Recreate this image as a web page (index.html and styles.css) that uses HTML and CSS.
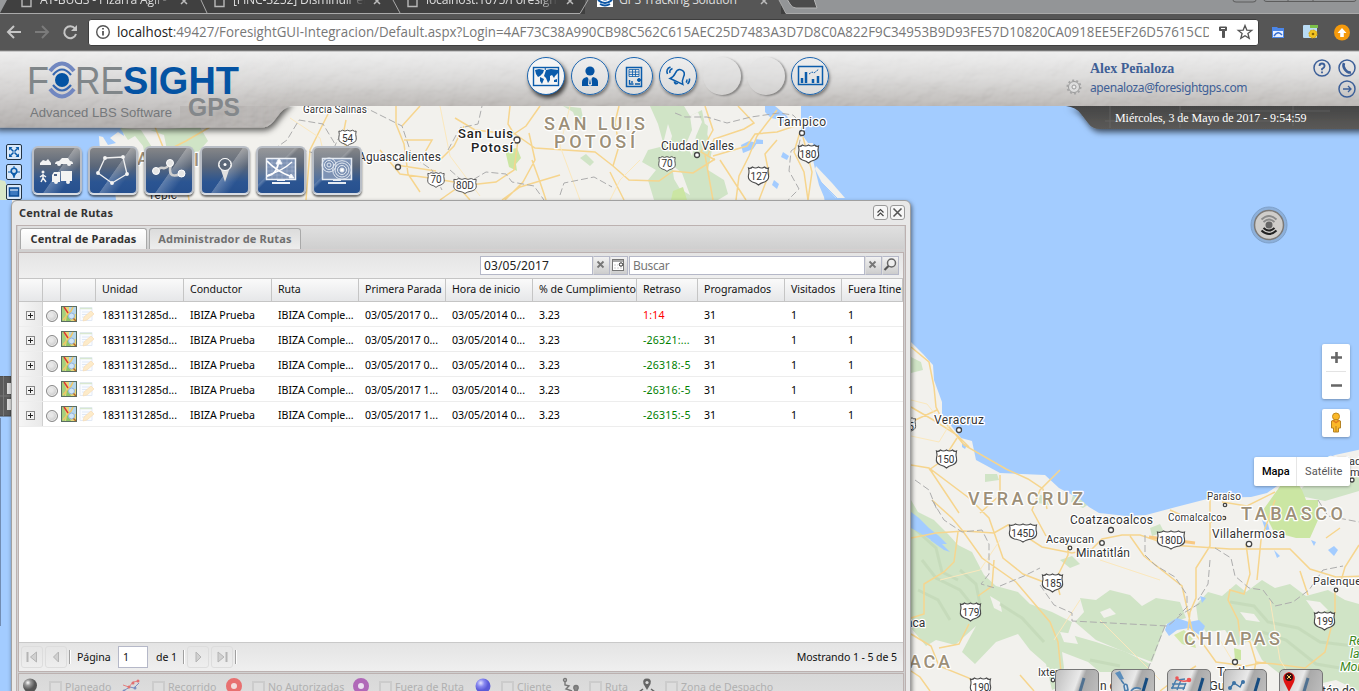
FILE: index.html
```html
<!DOCTYPE html>
<html lang="es">
<head>
<meta charset="utf-8">
<title>GPS Tracking Solution</title>
<link rel="stylesheet" href="styles.css">
</head>
<body>
<svg class="defs" width="0" height="0">
  <defs>
    <symbol id="i-map" viewBox="0 0 16 16"><rect x=".5" y=".5" width="15" height="15" fill="#e8d878" stroke="#5a6d62"/><path d="M1 1h2l2 7-1 7H1z" fill="#a5cf7d"/><path d="M8 1h7v7H8z" fill="#b4d5ea"/><path d="M2 14l5-6 3-3 2-4" stroke="#f2c665" fill="none" stroke-width="1.600"/><path d="M3 1l4 6" stroke="#d33" stroke-width="1.400"/><path d="M6 9l-1 6h5l-2-4z" fill="#8fc468"/><circle cx="10.500" cy="10" r="3" fill="#cfe4f7" stroke="#8fb2da"/><path d="M12.500 12.500l2.500 2.500" stroke="#b5652d" stroke-width="1.500"/></symbol>
    <symbol id="i-note" viewBox="0 0 16 16"><path d="M1 1.500h12v13H1z" fill="#fafcff" stroke="#e3eaf5"/><path d="M1 2.500h12" stroke="#d8e8d0" stroke-width="1.500"/><path d="M3 6h8M3 8.500h6M3 11h4" stroke="#dfe8f6"/><path d="M4 15l1-4 7-6 3 3-7 6z" fill="#fdebc9" stroke="#f6d8ae" stroke-width=".6"/></symbol>
    <symbol id="i-plus" viewBox="0 0 9 9"><rect x=".5" y=".5" width="8" height="8" fill="#f3f3f3" stroke="#888"/><path d="M2 4.500h5M4.500 2v5" stroke="#222"/></symbol>
    <symbol id="i-page" viewBox="0 0 11 14"><path d="M1 0v12.500h9V0" fill="none" stroke="#b8b8b8" stroke-width="1.400"/></symbol>
    <symbol id="i-x" viewBox="0 0 8 8"><path d="M1 1l6 6M7 1L1 7" stroke="#bbb" stroke-width="1.500"/></symbol>
    <symbol id="i-pen" viewBox="0 0 44 40"><path d="M24 26L29 9" stroke="#164c80" stroke-width="3"/></symbol>
    <symbol id="shield" viewBox="0 0 22 20" overflow="visible"><path d="M1 2Q3 3 5 1Q8 3 11 1Q14 3 17 1Q19 3 21 2Q20 6 21 9Q22 14 17 16Q13 17 11 19Q9 17 5 16Q0 14 1 9Q2 6 1 2Z" fill="#fff" stroke="#4a4a4a" stroke-width="1.100"/></symbol>
    <symbol id="shield-w" viewBox="0 0 29 20" overflow="visible"><path d="M1 2Q4 3 7 1Q11 3 14.500 1Q18 3 22 1Q25 3 28 2Q27 6 28 9Q29 14 23 16Q17 17 14.500 19Q12 17 6 16Q0 14 1 9Q2 6 1 2Z" fill="#fff" stroke="#4a4a4a" stroke-width="1.100"/></symbol>
  </defs>
</svg>

<header class="browser">
  <div class="tabs">
    <div class="tab tab-1"><svg class="fav" width="11" height="14"><use href="#i-page"/></svg><span class="tab-title fade">AT-BUGS - Pizarra Agil -</span><svg class="tx" width="8" height="8"><use href="#i-x"/></svg></div>
    <div class="tab tab-2"><svg class="fav" width="11" height="14"><use href="#i-page"/></svg><span class="tab-title fade">[FINC-3252] Disminuir el</span><svg class="tx" width="8" height="8"><use href="#i-x"/></svg></div>
    <div class="tab tab-3"><svg class="fav" width="11" height="14"><use href="#i-page"/></svg><span class="tab-title fade">localhost:1075/Foresight</span><svg class="tx" width="8" height="8"><use href="#i-x"/></svg></div>
    <div class="tab tab-4"><svg class="fav" width="16" height="16"><rect width="16" height="16" fill="#fff"/><circle cx="8" cy="6" r="3.500" fill="#0b55a5"/><path d="M1 9q7 6 14 0M3 13q5 3 10 0" stroke="#0b55a5" stroke-width="2" fill="none"/></svg><span class="tab-title">GPS Tracking Solution</span><svg class="tx" width="8" height="8"><use href="#i-x"/></svg></div>
    <svg class="tab-lines" width="1359" height="14" viewBox="0 0 1359 14"><path d="M0 13L7 0H0z" fill="#97999b"/><path d="M779 0L786 13.500H1359V0z" fill="#939597"/><path d="M0 13.500H580L588 0M201 0l6 13M393 0l7 13M779 0l7 13.500H1359" fill="none" stroke="#aaa"/><path d="M787 -1h27l3 9h-21q-4 0-6-4z" fill="#4b4b4b" stroke="#b5b5b5"/><path d="M1233 0q0 2 3 2h17q3 0 3-2M1264 0q0 1.500 3 1.500h86q3 0 3-1.500M1288 0v2M1313 0v2" stroke="#5d5d5d" fill="none"/></svg>
  </div>
  <div class="toolbar">
    <svg class="nav-icons" width="80" height="22" viewBox="0 0 80 22"><path d="M21 11H9M14 5l-6 6 6 6" fill="none" stroke="#c6c6c6" stroke-width="2"/><path d="M35 11h12M42 5l6 6-6 6" fill="none" stroke="#7b7b7b" stroke-width="2"/><path d="M75 7.500A6 6 0 1 0 76 13" fill="none" stroke="#c6c6c6" stroke-width="2"/><path d="M77 4v6h-6z" fill="#c6c6c6"/></svg>
    <div class="omnibox">
      <svg width="16" height="16"><circle cx="8" cy="8" r="6.300" fill="none" stroke="#555" stroke-width="1.400"/><path d="M8 7v4.500M8 4v1.600" stroke="#555" stroke-width="1.800"/></svg>
      <svg class="url" width="1094" height="22"><text x="0" y="16" textLength="1095" lengthAdjust="spacingAndGlyphs"><tspan fill="#222">localhost</tspan>:49427/ForesightGUI-Integracion/Default.aspx?Login=4AF73C38A990CB98C562C615AEC25D7483A3D7D8C0A822F9C34953B9D93FE57D10820CA0918EE5EF26D57615CD</text></svg>
      <svg width="36" height="16" viewBox="0 0 36 16"><path d="M6.500 3h7v3.500h-2V13.500h-2V6.500h-3z" fill="#555" stroke="#555"/><path d="M8 4.500h4" stroke="#fff"/><path d="M30 1.500l1.800 4.600 5 .3-3.900 3.100 1.300 4.900-4.200-2.700-4.200 2.700 1.300-4.900-3.900-3.100 5-.3z" transform="translate(2)" fill="none" stroke="#555" stroke-width="1.300"/></svg>
    </div>
    <svg class="ext" width="90" height="20" viewBox="0 0 90 20"><path d="M5 5h5l1 1h6v10H5z" fill="#4b86e8"/><path d="M6 9h10v6H6z" fill="#e9f0ff"/><path d="M7 14q4-6 8-1" stroke="#356dd0" stroke-width="1.500" fill="none"/><rect x="36" y="3" width="14" height="13" rx="1" fill="#b9dcf5"/><path d="M43 3h8v3h-8z" fill="#7cc04a"/><circle cx="46" cy="12" r="4" fill="#f2c321" stroke="#d9a410" stroke-dasharray="2 1"/><circle cx="46" cy="12" r="1.300" fill="#8b6508"/><circle cx="75" cy="10.500" r="8" fill="#f59a0c"/><path d="M75 6l4.500 5h-2.700v4h-3.600v-4h-2.700z" fill="#fff"/></svg>
  </div>
</header>

<main class="stage">
  <svg class="map" width="1359" height="640" viewBox="0 51 1359 640">
    <rect y="51" width="1359" height="640" fill="#f2f1ed"/>
    <path d="M0 51H92L100 150 112 165 116 200H12V691H0z" fill="#a3ccff"/>
    <path d="M92 127l3 8 8 2 5 8 8-2-6-5 8-6 6 4-2-9zM0 178l8 4 6 10-2 8H0z" fill="#a3ccff"/>
    <path d="M0 180l5 1 4 10 6 9H0z" fill="#d9e8c8"/>
    <g fill="#d0e4c6">
      <path d="M120 128l8 12 7-4 8 10 2 10 8 30 12 10h8l-6-24-12-20-14-22zM150 130l14 5 4 20 20 8 20-22-8-14zM563 106l10 6 4 10 6-4-2-10zM580 158l10 8 4-4-8-8zM650 106h34l6 10 12-6 4 20 6 20-4 20 16 10 4 14-10 6h-64l-6-20 8-10-14-8 6-12 16-4-6-22zM700 120l8 6-2 24-6-10z"/>
      <path d="M911 357l10 5 2 8-12 3zM985 474l12 0 2 6-14 2zM911 500L918 512 934 520 948 534 958 545 972 552 984 575 996 586 1018 592 1030 604 1052 612 1072 622 1068 634 1096 642 1126 652 1150 664 1146 672 1100 672 1088 662 1062 652 1066 684 1052 690 1046 664 1030 650 1018 634 996 642 975 664 962 652 976 626 955 645 936 640 926 646 911 628z"/>
      <path d="M1080 598L1096 600 1110 590 1130 595 1142 606 1156 598 1180 602 1186 618 1166 624 1160 640 1152 662 1120 650 1096 640 1075 622 1084 612z"/>
      <path d="M1196 605L1208 592 1222 596 1236 584 1246 592 1262 580 1275 588 1290 584 1306 596 1328 590 1345 600 1359 604V691L1336 680 1318 684 1300 672 1280 674 1262 660 1252 640 1236 646 1225 630 1206 632 1198 620zM1285 505l20-8 20 4 34-10v-16l-20 6-32 2-8 8z"/>
      <path d="M1075 488l10 6 4 10-6 4-12-6zM1060 560l12-4 8 8-10 4zM1040 495l12 2-2 8-12-2zM1150 528l10-4 4 8-12 4z"/>
    </g>
    <g fill="#f2f1ed"><path d="M690 116l8-4 4 10-6 14-4 20-6-12 6-14zM668 124l4 12-4 16-4-12zM672 165l10 8 8 22-10-6-6-10zM1060 632l14 2 4 10-14-2zM1100 612l10-4 6 6-12 4zM1240 612l14 2 6 8-14-2zM1306 600l14 2 8 8-12 4zM990 596l10 6 2 10-8-4z"/></g>
    <g fill="none" stroke="#bfd6b4" stroke-width="3" opacity=".6"><path d="M916 530l20 18 6 24 16 8M922 560l14 18 24 12 16 20M918 590l20 10 12 20M960 570l16 14 4 20M1000 604l22 14 22 24M1090 660l30 6M1230 602l24 4 14 16 30 6 22 14 34 4M1262 632l24 8 30 24 36 6"/></g>
    <path d="M505 150l12-2 4 10-5 6 1 7-8-4z" fill="#cbe6a3"/>
    <path d="M673 191l10-4 4 13h-16zM1263 510l20-28h14l5 8 4 10 12 0 0 20-8 18-14 0-22-6zM1234 648l7 2 0 10-6 0z" fill="#cbe6a3"/>
    <path d="M1174 635l10-5 10 10 2 8-14-4z" fill="#d4e8ac"/>
    <path d="M801 106V128l2 8 5 7 5 0-1 12 3 14 4 16 5 12 2 12L911 342l12 12 10 11 1 15 8 22 0 12 6 8 13 16 11 3 4 19 24 13 45 2 14 13 21 11 9 8 10 6 27 3 20-1 30-8 35-9 40-1 16-4 20-14 8-8 40-16 28-6V51H801z" fill="#a3ccff"/>
    <path d="M816 166l16 17 13 15h-9l-14-15-7-14z" fill="#f2f1ed"/><path d="M819 180l20 20" stroke="#a3ccff" fill="none"/>
    <g fill="#a3ccff">
      <path d="M765 106h10l12 10 6 10-4 2-8-8-10-2-6-6zM741 145l8-4 8 2-4 6-10 4zM755 139l8 1 0 4-7 0zM783 152l6 4-2 4-6-3zM774 180l5 4-2 5-5-4zM962 443l5 2-2 4-3-2zM911 512l8 6 10 10 10 8 8 8-10 0-12-8-14-8zM930 540l10 2 10 10-6-2zM1167 624l10-6 12 4 10-2 6 6-4 10-12-8-12 2-8 6-4-6zM1200 596l6 2-4 5zM1262 520l6 4 2 8-5-3zM1328 550l6-4 4 4-4 6zM1311 540l5 2-2 4zM1274 550l6 6-3 2z"/>
    </g>
    <g fill="none" stroke="#f6d58e" stroke-width="1.500">
      <path d="M155 127l12 30 18 20 4 23M210 127l-24 14-16 8M346 120l-4 20 8 12M396 106v18l8 20 4 30 12 18M380 150l20 24 30 4 24 4 16 18M420 106l-18 20M404 140h28l-8 14M396 165l40 6M330 110l-20 40-4 50M440 160l14-14 10-20M540 106l-14 20-12 8-6-10 2-18M515 134l20 14 60 4 18 14 16 14 30 1 14-10 20 2 22-14M529 133l6 27-12 22-20 20M518 140l-4 30-18 12-36 4-20 14M532 160l8 22 6 18M613 166l6-20-4-24 4-16M610 172l14 28M560 175l-40 12-18 13M455 118l20 12 35 4M708 155l6-16 30-10 10-6-16-17M705 155l8 45M713 156l34-10 8-12 22-2 24-8M715 160l-14-8 12-22-8-24M757 136l20-26M757 136l-8 20-10 20-3 24M777 140l-12 14 4 20-10 26M800 132l-6 20 10 20 4 28M720 160l26 40M803 137l9 35-4 28"/>
      <path d="M911 347l18 15 5 25 2 20 6 12 14 16 8 10 42 24 22 10 15 10 4 20M911 407l24 14 22 14 12 12M911 422l26-12M957 438l-14 22-14 10M929 468l20 30 10 15M911 465l18 3 40 30 20 20 14 40 20 16 26 10M911 538l25-5 28-2 30 2 14-8 34 22 30 6 20-4 10-10 20-4 18 0 30 10 60 4 60 0 20 20 26 8 60-2 14 0M932 500l20 18 10 12 20 28 34 24 34 40 8 20 4 40 16 24M958 532l-4 30-10 10-20 12 0 30-13 4M994 560l-2 26-14 10M911 634l20 12 8 20 30 12 10 13M969 624l-10 20-20 4M1060 595l-4-16 12-24 0-10M1130 536l14 20 38 30 10 44 14 18 10 14 30 4 20-4M1210 500l0 46-14 22 0 30-6 14-2 18M1246 544l4 30-6 20-14-4-2 10 10 20 2 16 10 6 6 20-4 20M1340 528l-14 10M1335 590l0 22-10 40-20 16-30-4-20-2M1275 500l-14 40-4 40M1060 470l-20 20-8 20 14 26M1000 475v20l-20 18M1170 510l22 10 20 2M1020 675l14 16M1196 666l-16 10-20 15M1222 502l25 4 28-14M930 691l-10-14-9-6M1359 545l-14 22-4 14M1300 571l8 24"/>
    </g>
    <g fill="none" stroke="#fbe8bd" stroke-width="1"><path d="M290 118l30 20 10 40M440 106l10 50 30 40M570 106l-10 40 20 54M640 160l-20 20-10 20M911 436l28 6 12-20M911 400l16 4 8 10M1000 540l-20 30-40 10M1080 600l-26 40M1100 620l60 60M1270 600l10 60 20 31M1220 640l30 50M1100 560l60 20"/></g>
    <path d="M1149 537l46 6" stroke="#f8c983" stroke-width="3"/>
    <path d="M273 150l14-10 12-20 24 4 12 20M362 106l40 20 10 30 20 14 10 20M450 170l16 14 20-12 20 2 6 8 22 4 10 14M448 150l12-22 18-4 4-18M675 113l10 4 22 0 20 6 24-6 28-4 14 2 10 10-4 20-8 6-2 20 10 18-10 10-4 8M560 195l4-12 30-6 18 10M290 147l40 10 8-18M932 500l12 20 18 12 20-2 7 14 0 30-8 10 14 4 M1000 586l24-10 16-8M1040 585l14 20 18 8 0 8 96 5 14-12 20-12M1165 626l-19 48M1145 535l0 20 10 10 20 12 12 18 0 12-8 8M1215 548l16 10 4 18 14 12 14 2 12 16 18-4 16-12 14-20 20-4M1318 500l10 16 31 6M915 480l14 10 8 20M1210 560l-2 24-10 16" fill="none" stroke="#adadad" stroke-dasharray="7 3"/>
    <g class="sh"><use href="#shield" x="338" y="129" width="19" height="18"/><use href="#shield" x="427" y="171" width="18" height="18"/><use href="#shield-w" x="453" y="177" width="24" height="18"/><use href="#shield" x="658" y="155" width="18" height="18"/><use href="#shield" x="747" y="166" width="23" height="20"/><use href="#shield" x="797" y="144" width="23" height="20"/><use href="#shield" x="897" y="417" width="20" height="17"/><use href="#shield" x="935" y="449" width="23" height="20"/><use href="#shield-w" x="1008" y="523" width="30" height="20"/><use href="#shield-w" x="1156" y="530" width="30" height="20"/><use href="#shield" x="1041" y="573" width="23" height="20"/><use href="#shield" x="959" y="602" width="23" height="20"/><use href="#shield" x="1313" y="611" width="23" height="20"/><use href="#shield" x="969" y="677" width="23" height="20"/></g>
    <g class="route" text-anchor="middle"><text x="347.500" y="142">54</text><text x="436" y="183">70</text><text x="465" y="189">80D</text><text x="667" y="167">70</text><text x="759" y="180">127</text><text x="808" y="158">180</text><text x="911" y="430">5</text><text x="946" y="463">150</text><text x="1023" y="537">145D</text><text x="1171" y="544">180D</text><text x="1053" y="587">185</text><text x="971" y="616">179</text><text x="1325" y="625">199</text><text x="981" y="691">190</text></g>
    <g fill="#fff" stroke="#444" stroke-width="1.300"><circle cx="398" cy="167" r="2.500"/><circle cx="517" cy="140" r="3"/><circle cx="697" cy="155" r="2.500"/><circle cx="802" cy="133" r="2.500"/><circle cx="959" cy="430" r="2.500"/><circle cx="1111" cy="530" r="2.500"/><circle cx="1070" cy="548" r="1.800"/><circle cx="1102" cy="543" r="2.300"/><circle cx="1225" cy="505" r="1.700"/><circle cx="1224" cy="518" r="1.700"/><circle cx="1249" cy="544" r="2.700"/><circle cx="1336" cy="590" r="1.800"/><circle cx="1235" cy="662" r="2.500"/><circle cx="1352" cy="480" r="2"/><circle cx="1053" cy="680" r="1.800"/></g>
    <g class="city">
      <text x="303" y="113" font-size="10" textLength="64">García Salinas</text>
      <text x="358" y="161" font-size="12" textLength="83">Aguascalientes</text>
      <text x="458" y="138" font-size="13" class="big" textLength="55">San Luis</text><text x="471" y="152" font-size="13" class="big" textLength="42">Potosí</text>
      <text x="661" y="150" font-size="12" textLength="73">Ciudad Valles</text>
      <text x="777" y="126" font-size="12" textLength="49">Tampico</text>
      <text x="148" y="199" font-size="12" textLength="29">Tepic</text>
      <text x="934" y="424" font-size="12" textLength="50">Veracruz</text>
      <text x="1070" y="524" font-size="12" textLength="83">Coatzacoalcos</text>
      <text x="1046" y="543" font-size="11" textLength="48">Acayucan</text>
      <text x="1076" y="557" font-size="12" textLength="54">Minatitlán</text>
      <text x="1168" y="521" font-size="10" textLength="54">Comalcalco</text>
      <text x="1207" y="500" font-size="10" textLength="34">Paraíso</text>
      <text x="1212" y="538" font-size="12" textLength="73">Villahermosa</text>
      <text x="1313" y="585" font-size="11" textLength="48">Palenque</text>
      <text x="906" y="627" font-size="12">aca</text>
      <text x="1038" y="676" font-size="10.500">Ixtepec</text>
      <text x="1217" y="676" font-size="13">Tuxtla</text><text x="1209" y="690" font-size="13">Gutiérrez</text>
      <text x="1100" y="690" font-size="12">n de</text><text x="1322" y="695" font-size="12">tán de</text>
      <text x="1327" y="465" font-size="11">Ciudad</text><text x="1350" y="476" font-size="11">men</text>
    </g>
    <g class="state">
      <text x="544" y="130" textLength="105">SAN LUIS</text><text x="554" y="148" textLength="85">POTOSÍ</text>
      <text x="137" y="165">A</text><text x="194" y="166">I</text>
      <text x="968" y="505" textLength="119">VERACRUZ</text><text x="1241" y="520" textLength="106">TABASCO</text>
      <text x="1184" y="645" textLength="100">CHIAPAS</text><text x="909" y="668" textLength="45">ACA</text>
    </g>
    <g class="park"><text x="1349" y="645">Res</text><text x="1350" y="658">la</text><text x="1340" y="671">Mon</text></g>
  </svg>

  <svg class="banner" width="1359" height="90" viewBox="0 51 1359 90">
    <defs>
      <linearGradient id="g-bar" x1="0" y1="0" x2="0" y2="1"><stop offset="0" stop-color="#ebebeb"/><stop offset=".5" stop-color="#d2d1d0"/><stop offset="1" stop-color="#aeaaa7"/></linearGradient>
      <linearGradient id="g-left" x1="0" y1="0" x2="0" y2="1"><stop offset="0" stop-color="#ebebeb"/><stop offset=".5" stop-color="#cac8c7"/><stop offset="1" stop-color="#a09c9a"/></linearGradient>
      <linearGradient id="g-date" x1="0" y1="0" x2="0" y2="1"><stop offset="0" stop-color="#454545"/><stop offset="1" stop-color="#5b5a58"/></linearGradient>
      <linearGradient id="g-fade" x1="0" x2="1" y1="0" y2="0"><stop offset=".7" stop-color="#fff"/><stop offset="1" stop-color="#000"/></linearGradient>
      <mask id="m-left"><rect y="51" width="295" height="90" fill="url(#g-fade)"/></mask>
      <filter id="stone" x="0" y="0" width="100%" height="100%"><feTurbulence type="fractalNoise" baseFrequency=".05 .07" numOctaves="3" seed="4"/><feDiffuseLighting lighting-color="#fff" surfaceScale="3" result="l"><feDistantLight azimuth="235" elevation="55"/></feDiffuseLighting><feComposite in="l" in2="SourceGraphic" operator="in"/></filter>
      <filter id="drop" x="-10%" y="-10%" width="120%" height="150%"><feDropShadow dx="2" dy="3" stdDeviation="3" flood-opacity=".65"/></filter>
      <clipPath id="c-head"><path d="M0 51H1359V106H298Q286 106 280 113L273 122Q268 127.500 261 127.500H0z"/></clipPath>
    </defs>
    <path d="M1066 106Q1076 107 1081 114L1088 123Q1092 129 1100 129H1365V106z" fill="url(#g-date)" filter="url(#drop)"/>
    <path d="M1110 106v22M1180 106v22M1293 106v20M1105 121h200M1180 111h150" stroke="#777" opacity=".45"/>
    <path d="M-6 100H292Q286 106 280 113L273 122Q268 127.500 261 127.500H-6z" fill="#a8a4a2" filter="url(#drop)"/>
    <g clip-path="url(#c-head)">
      <rect y="51" width="1359" height="55" fill="url(#g-bar)"/>
      <path d="M0 51H330V106H298Q286 106 280 113L273 122Q268 127.500 261 127.500H0z" fill="url(#g-left)" mask="url(#m-left)"/>
      <path d="M180 106h110l-25 22h-85z" fill="#a5a19f" opacity=".75"/>
      <rect y="51" width="1359" height="78" filter="url(#stone)" class="stone"/>
    </g>
    <path d="M0 51.500H1359" stroke="#c9c9c9"/>
    <g class="logo">
      <text x="27" y="94" textLength="22" lengthAdjust="spacingAndGlyphs" class="l1">F</text>
      <text x="75" y="94" textLength="49" lengthAdjust="spacingAndGlyphs" class="l1">RE</text>
      <text x="123" y="94" textLength="116" lengthAdjust="spacingAndGlyphs" class="l2">SIGHT</text>
      <text x="188" y="116" textLength="52" lengthAdjust="spacingAndGlyphs" class="l3">GPS</text>
      <text x="30" y="117" textLength="142" lengthAdjust="spacingAndGlyphs" class="l4">Advanced LBS Software</text>
      <circle cx="62" cy="80" r="7" fill="#0453a3"/>
      <g fill="none" stroke="#7187c0"><path d="M50 71Q62 56 74 71M50 89Q62 104 74 89" stroke-width="4"/><path d="M53 75Q62 64 71 75M53 85Q62 96 71 85" stroke="#3567b1" stroke-width="2.200"/></g>
    </g>
  </svg>

  <nav class="rounds">
    <span class="round on"><svg width="38" height="38"><rect x="6.500" y="10.500" width="25" height="18" fill="none" stroke="#0b5cab" stroke-width="1.400"/><path d="M8 13l4-1 5 1-1 3-3 3-2 1-2-3zM13 20l4 2-2 5-2-3zM19 13l5-1 7 1v3l-3 3-1 2-2-3-2 1 0 4-2 3-2-5-2-2zM27 23l3-1 0 3-3 0zM17 12l2-1 0 2z" fill="#0b5cab"/></svg></span>
    <span class="round"><svg width="38" height="38"><circle cx="19" cy="14" r="4.600" fill="#0453a3"/><path d="M11 29v-4q0-4 5-5l3 3 3-3q5 1 5 5v4z" fill="#0453a3"/><path d="M17.500 21h3l.5 7-2 1-2-1z" fill="#e7e7e7"/><path d="M19 21.500l.8 5-.8 1-.8-1z" fill="#0453a3"/></svg></span>
    <span class="round"><svg width="38" height="38" fill="none" stroke="#0b5cab"><path d="M11.500 10.500h15v19h-15z" stroke-width="1.500"/><path d="M14 12.500h10v7H14zM14 15h10M14 17.500h10M17.500 12.500v7M20.500 12.500v7" stroke-width=".8"/><path d="M14.500 23v4h4M17 24v2M20 27h5" stroke-width="1.400"/><circle cx="24" cy="23" r="1.500" fill="#0b5cab"/></svg></span>
    <span class="round"><svg width="38" height="38" fill="none" stroke="#0b5cab" stroke-width="1.500"><g transform="rotate(25 20 19)"><path d="M13 25q2.500-2.500 2.500-7 0-5.500 4.500-5.500t4.500 5.500q0 4.500 2.500 7z"/><path d="M18 26q2 3 4 0" fill="#0b5cab"/></g><path d="M8.500 17q-2-5 3-7M11 16q-1-3 2.500-4.500M28.500 27q2.500-2 2-5.500M27 25.500q1-1 1-3"/></svg></span>
    <span class="round empty"></span>
    <span class="round empty"></span>
    <span class="round"><svg width="38" height="38" fill="none" stroke="#0b5cab"><rect x="7.500" y="9.500" width="24" height="18" stroke-width="1.500"/><path d="M11 26v-5M15 26V15M22 26v-4M27 26v-7" stroke-width="2.500"/><path d="M18 17l3-2 2 1 5-4" stroke-dasharray="2 1"/></svg></span>
  </nav>

  <section class="account">
    <div class="who">
      <strong>Alex Peñaloza</strong>
      <div class="mail"><svg width="18" height="18" viewBox="0 0 18 18"><circle cx="9" cy="9" r="5.500" fill="#ddd" stroke="#999"/><circle cx="9" cy="9" r="6.600" fill="none" stroke="#a5a5a5" stroke-width="1.800" stroke-dasharray="2 2.150"/><circle cx="9" cy="9" r="2" fill="#eee" stroke="#999"/></svg><span>apenaloza@foresightgps.com</span></div>
    </div>
    <svg width="44" height="44" viewBox="0 0 44 44" fill="none" stroke="#3c5f98" stroke-width="1.500"><circle cx="10" cy="11" r="8"/><circle cx="35" cy="11" r="8"/><circle cx="35" cy="32" r="8"/><path d="M7.500 9Q7.500 6.500 10 6.500T12.600 9Q12.500 10.500 10 12v1.200M10 14.500v1.700" stroke-width="1.800"/><path d="M32 6q-1.500 3 1 6.500t6 3" stroke-width="2.600"/><path d="M31 32h8M36 29l3 3-3 3" stroke-width="1.300"/></svg>
  </section>
  <div class="date">Miércoles, 3 de Mayo de 2017 - 9:54:59</div>

  <div class="mini">
    <svg width="16" height="16"><path d="M3 3l3.500 3.500M11 3L7.500 6.500M3 11l3.500-3.500M11 11L7.500 7.500" stroke="#0b5cab" stroke-width="1.500"/><path d="M2 2h3.500L2 5.500zM12 2H8.500L12 5.500zM2 12h3.500L2 8.500zM12 12H8.500L12 8.500z" fill="#0b5cab"/></svg>
    <svg width="16" height="16"><path d="M7 1v12M1 7h12" stroke="#0b5cab"/><circle cx="7" cy="6" r="2.800" fill="#cde" stroke="#0b5cab" stroke-width="1.600"/><path d="M5 9h4l-2 4z" fill="#0b5cab"/></svg>
    <svg width="16" height="16"><path d="M2.500 3h9v8h-9z" fill="#3b78bf" stroke="#0b4c96" stroke-width="1.500"/><path d="M3 5h8" stroke="#fff"/></svg>
  </div>

  <nav class="tiles">
    <span class="tile"><svg width="50" height="48" fill="#f3f3f3"><path d="M8 17l3-3 3 1 2-2 3 4v2H8zM23 18q0-3 4-3l3-3h6l2 3q3 0 3 3z"/><circle cx="27" cy="18" r="2"/><circle cx="37" cy="18" r="2"/><path d="M20 29l2-3h6v10h-8zM29 25h11v10H29z"/><path d="M22 28h3v2h-3z" fill="#4a6085"/><circle cx="24" cy="36" r="2"/><circle cx="36" cy="36" r="2"/><circle cx="11" cy="26" r="1.500"/><path d="M11 28v4l-2 4M11 32l3 4M8 31l3-2 3 2" stroke="#f3f3f3" stroke-width="1.500" fill="none"/></svg></span>
    <span class="tile"><svg width="50" height="48" fill="none" stroke="#f0f0f0" stroke-width="1.300"><path d="M17 12l18-1 4 17-15 9-14-10z"/><g fill="#fff"><circle cx="17" cy="12" r="1.300"/><circle cx="35" cy="11" r="1.300"/><circle cx="39" cy="28" r="1.300"/><circle cx="24" cy="37" r="1.300"/><circle cx="10" cy="27" r="1.300"/></g></svg></span>
    <span class="tile"><svg width="50" height="48" fill="none" stroke="#cfcfcf" stroke-width="2.600"><path d="M12 25q4-4 7-3t7-4M27 19q-2 6 0 9t10 0"/><g fill="#e6e6e6" stroke="#fff" stroke-width="1"><circle cx="12" cy="25" r="3.500"/><circle cx="26" cy="17" r="3.500"/><circle cx="37.500" cy="27.500" r="3.500"/></g></svg></span>
    <span class="tile"><svg width="50" height="48"><path d="M25 36l-4-12q-5-4-2-9 6-6 12 0 3 5-2 9z" fill="#e0e0e0"/><circle cx="25" cy="18.500" r="6" fill="#5b6777" stroke="#fff"/><circle cx="25" cy="18.500" r="1.500" fill="#fff"/></svg></span>
    <span class="tile"><svg width="50" height="48" fill="none" stroke="#eef2f8"><path d="M10.500 12.500h29v21h-29z" fill="#7d92b4" stroke-width="1.500"/><path d="M11 17h28M11 21h28M11 25h28M11 29h28M16 13v20M21 13v20M26 13v20M31 13v20M36 13v20" opacity=".2"/><path d="M11 15q9 10 25 16M11 30q10-1 12-16" stroke-width="1.800" stroke="#fff"/><path d="M12 29q14-4 24-13" stroke="#fff" stroke-width="1.300"/><path d="M20 18l3-6 3 6zM33 32l5 0-3-4z" fill="#fff"/><path d="M21 34h8M16 37h18" stroke-width="2"/></svg></span>
    <span class="tile"><svg width="50" height="48" fill="none" stroke="#e4eaf2"><path d="M10.500 12.500h29v21h-29z" fill="#7d92b4" stroke-width="1.500"/><circle cx="17" cy="19" r="2"/><circle cx="17" cy="19" r="4.500"/><circle cx="17" cy="19" r="7"/><circle cx="30" cy="24" r="2" fill="#fff"/><circle cx="30" cy="24" r="4.500"/><circle cx="30" cy="24" r="7"/><circle cx="30" cy="24" r="9.300"/><path d="M21 34h8M16 37h18" stroke-width="2"/></svg></span>
  </nav>

  <svg class="side" width="14" height="260"><path d="M-2 0H11V40H-2z" fill="#5a5a5a" stroke="#454545"/><path d="M3.500 0v40M0 20h11" stroke="#777"/><path d="M7 7h5v11H7zM7 23h5v11H7z" fill="#ddd"/><path d="M0 42v208" stroke="#62789a" stroke-width="1.500"/></svg>

  <svg class="pulse" width="38" height="38"><circle cx="19" cy="19" r="18" fill="#8db0da" stroke="#7fa1ca"/><circle cx="19" cy="19" r="14.500" fill="#cfcdca" stroke="#7c7a78" stroke-width="1.500"/><circle cx="19" cy="19" r="3.500" fill="#666"/><path d="M13.500 16q5.500-5 11 0M11.500 13.500q7.500-7 15 0" stroke="#8a8a8a" stroke-width="1.800" fill="none"/><path d="M13.500 22q5.500 5 11 0M11.500 24.500q7.500 7 15 0" stroke="#222" stroke-width="2" fill="none"/></svg>
  <div class="zoomer"><svg width="28" height="55"><path d="M9 13.500h11M14.500 8v11M9 41.500h11" stroke="#666" stroke-width="2.600"/><path d="M4 27.500h20" stroke="#e3e3e3"/></svg></div>
  <div class="man"><svg width="28" height="28"><circle cx="14" cy="7.500" r="3.500" fill="#fbb829" stroke="#c28a1c"/><path d="M9.500 12q4.500-3 9 0v7h-2v4h-5v-4h-2z" fill="#fbb829" stroke="#b58324"/><path d="M11 11.500l3 2 3-2" stroke="#e07b1e" fill="none" stroke-width="1.500"/><path d="M14 17v6" stroke="#b58324"/></svg></div>
  <div class="maptype"><b>Mapa</b><span>Satélite</span></div>

  <nav class="edit">
    <span><svg width="44" height="40"><use href="#i-pen" opacity=".6"/></svg></span>
    <span><svg width="44" height="40"><use href="#i-pen" x="7"/><path d="M4 4l5-2 4 8-4 1z" fill="#5b8dbb"/><path d="M10 11l3 4M13 17q1-3 3-1l1 5-3 1zM20 22q4-5 10-2" stroke="#4a7dac" stroke-width="1.600" fill="#dfe8f0"/></svg></span>
    <span><svg width="44" height="40"><use href="#i-pen" x="7"/><path d="M5 19l4-8 9-1M5 15h14M4 19h14M9 11L5 20M14 11l-4 10M19 14l-3 7" stroke="#467cac" fill="none" stroke-width="1.300"/><path d="M10 10q6 4 12 1" stroke="#e55" stroke-width="1.500" fill="none"/><circle cx="22" cy="11" r="2.300" fill="#e55"/><circle cx="10" cy="9" r="1.800" fill="#e55"/></svg></span>
    <span><svg width="44" height="40"><use href="#i-pen" x="7"/><path d="M7 19l4-5 6 4 3-6" stroke="#3c72a4" fill="none" stroke-width="1.500"/><circle cx="11" cy="14" r="2" fill="#3c72a4"/><circle cx="20" cy="13" r="2" fill="#3c72a4"/><circle cx="7" cy="19" r="2" fill="#3c72a4"/></svg></span>
    <span><svg width="44" height="40"><use href="#i-pen" opacity=".6"/><path d="M10 23L5 13q-3-8 5-10 8 2 5 10z" fill="#df1414"/><circle cx="10" cy="8" r="4" fill="#311"/><path d="M8 6l4 4M12 6l-4 4" stroke="#fc6"/></svg></span>
  </nav>

  <section class="win">
    <div class="win-head"><b>Central de Rutas</b>
      <div class="tools"><span><svg width="13" height="13"><path d="M3.500 6.500l3-3 3 3M3.500 10l3-3 3 3" stroke="#444" fill="none" stroke-width="1.200"/></svg></span><span><svg width="13" height="13"><path d="M2.500 2.500l8 8M10.500 2.500l-8 8" stroke="#555" stroke-width="1.600"/></svg></span></div>
    </div>
    <div class="frame">
      <div class="tabstrip"><span class="wt active">Central de Paradas</span><span class="wt">Administrador de Rutas</span></div>
      <div class="panel">
        <div class="search">
          <div class="field date-f"><span>03/05/2017</span></div><i class="trig"><svg width="16" height="18"><path d="M4.500 5.500l6 6M10.500 5.500l-6 6" stroke="#777" stroke-width="1.800"/></svg></i><i class="trig"><svg width="16" height="18"><rect x="2.500" y="3.500" width="11" height="11" fill="#fff" stroke="#777"/><path d="M3 5h10" stroke="#aaa" stroke-width="2"/><circle cx="11" cy="8.500" r="1.700" fill="#fff" stroke="#222"/><path d="M4 9h4M4 12h8" stroke="#ccc" stroke-dasharray="2 1"/></svg></i>
          <div class="field find-f"><span>Buscar</span></div><i class="trig"><svg width="16" height="18"><path d="M4.500 5.500l6 6M10.500 5.500l-6 6" stroke="#777" stroke-width="1.800"/></svg></i><i class="trig"><svg width="16" height="18"><circle cx="9.500" cy="7" r="4" fill="#eee" stroke="#666" stroke-width="1.500"/><path d="M6.500 10l-4 4" stroke="#555" stroke-width="2.200"/></svg></i>
        </div>
        <div class="grid ghead"><span></span><span></span><span></span><span>Unidad</span><span>Conductor</span><span>Ruta</span><span>Primera Parada</span><span>Hora de inicio</span><span>% de Cumplimiento</span><span>Retraso</span><span>Programados</span><span>Visitados</span><span>Fuera Itinerario</span></div>
        <div class="rows">
          <div class="grid row"><span class="exp"><svg width="9" height="9"><use href="#i-plus"/></svg></span><span class="rad"><i></i></span><span class="ico"><svg width="16" height="16"><use href="#i-map"/></svg><svg width="16" height="16"><use href="#i-note"/></svg></span><span>1831131285d...</span><span>IBIZA Prueba</span><span>IBIZA Comple...</span><span>03/05/2017 0...</span><span>03/05/2014 0...</span><span>3.23</span><span class="late">1:14</span><span>31</span><span>1</span><span>1</span></div>
          <div class="grid row"><span class="exp"><svg width="9" height="9"><use href="#i-plus"/></svg></span><span class="rad"><i></i></span><span class="ico"><svg width="16" height="16"><use href="#i-map"/></svg><svg width="16" height="16"><use href="#i-note"/></svg></span><span>1831131285d...</span><span>IBIZA Prueba</span><span>IBIZA Comple...</span><span>03/05/2017 0...</span><span>03/05/2014 0...</span><span>3.23</span><span class="ok">-26321:...</span><span>31</span><span>1</span><span>1</span></div>
          <div class="grid row"><span class="exp"><svg width="9" height="9"><use href="#i-plus"/></svg></span><span class="rad"><i></i></span><span class="ico"><svg width="16" height="16"><use href="#i-map"/></svg><svg width="16" height="16"><use href="#i-note"/></svg></span><span>1831131285d...</span><span>IBIZA Prueba</span><span>IBIZA Comple...</span><span>03/05/2017 0...</span><span>03/05/2014 0...</span><span>3.23</span><span class="ok">-26318:-5</span><span>31</span><span>1</span><span>1</span></div>
          <div class="grid row"><span class="exp"><svg width="9" height="9"><use href="#i-plus"/></svg></span><span class="rad"><i></i></span><span class="ico"><svg width="16" height="16"><use href="#i-map"/></svg><svg width="16" height="16"><use href="#i-note"/></svg></span><span>1831131285d...</span><span>IBIZA Prueba</span><span>IBIZA Comple...</span><span>03/05/2017 1...</span><span>03/05/2014 0...</span><span>3.23</span><span class="ok">-26316:-5</span><span>31</span><span>1</span><span>1</span></div>
          <div class="grid row"><span class="exp"><svg width="9" height="9"><use href="#i-plus"/></svg></span><span class="rad"><i></i></span><span class="ico"><svg width="16" height="16"><use href="#i-map"/></svg><svg width="16" height="16"><use href="#i-note"/></svg></span><span>1831131285d...</span><span>IBIZA Prueba</span><span>IBIZA Comple...</span><span>03/05/2017 1...</span><span>03/05/2014 0...</span><span>3.23</span><span class="ok">-26315:-5</span><span>31</span><span>1</span><span>1</span></div>
        </div>
        <div class="pager">
          <span class="pb"><svg width="20" height="20"><path d="M5.500 5v10" stroke="#b4b4b4" stroke-width="2"/><path d="M14.500 5v10l-6-5z" fill="#d0d0d0" stroke="#b4b4b4"/></svg></span><span class="pb"><svg width="20" height="20"><path d="M12.500 5v10l-5-5z" fill="#d0d0d0" stroke="#b4b4b4"/></svg></span><span class="bar"></span><span class="pl">Página</span><span class="pnum">1</span><span class="of">de 1</span><span class="bar"></span><span class="pb"><svg width="20" height="20"><path d="M8 5v10l5-5z" fill="#d0d0d0" stroke="#b4b4b4"/></svg></span><span class="pb"><svg width="20" height="20"><path d="M6 5v10l6-5z" fill="#d0d0d0" stroke="#b4b4b4"/><path d="M14.500 5v10" stroke="#b4b4b4" stroke-width="2"/></svg></span><span class="bar"></span><span class="count">Mostrando 1 - 5 de 5</span>
        </div>
      </div>
      <div class="legend">
        <div class="lg w1"><svg width="18" height="18"><defs><radialGradient id="ball" cx=".35" cy=".3"><stop offset="0" stop-color="#fff"/><stop offset=".4" stop-color="#999"/><stop offset="1" stop-color="#555"/></radialGradient><radialGradient id="ballb" cx=".35" cy=".3"><stop offset="0" stop-color="#e4e4ff"/><stop offset=".5" stop-color="#8888f0"/><stop offset="1" stop-color="#5b5bd8"/></radialGradient></defs><circle cx="8" cy="8.500" r="7" fill="url(#ball)"/></svg><i></i><span>Planeado</span></div>
        <div class="lg w2"><svg width="18" height="18"><path d="M1 8l6 2 4-5 6-1" stroke="#e58080" fill="none"/><path d="M1 14l7-4 4 1 5-5" stroke="#7d8fc0" fill="none"/><circle cx="7" cy="10" r="1.500" fill="#e07070"/><circle cx="11" cy="6" r="1.500" fill="#e07070"/><circle cx="16" cy="4" r="1.500" fill="#e07070"/><circle cx="2" cy="14" r="1.500" fill="#7d8fc0"/><circle cx="13" cy="11" r="1.500" fill="#7d8fc0"/></svg><i></i><span>Recorrido</span></div>
        <div class="lg w3"><svg width="18" height="18"><circle cx="9" cy="9" r="5.500" fill="#f3dede" stroke="#e87070" stroke-width="5"/></svg><i></i><span>No Autorizadas</span></div>
        <div class="lg w4"><svg width="18" height="18"><circle cx="9" cy="9" r="5.500" fill="#ecdff0" stroke="#b068b8" stroke-width="5"/></svg><i></i><span>Fuera de Ruta</span></div>
        <div class="lg w5"><svg width="18" height="18"><circle cx="9" cy="9" r="7.500" fill="url(#ballb)"/></svg><i></i><span>Cliente</span></div>
        <div class="lg w6"><svg width="18" height="18" fill="none" stroke="#777" stroke-width="1.400"><circle cx="3" cy="3" r="1.500"/><path d="M3 5v3l4 1-3 3 6 2"/><path d="M14 16l-2.200-5q0-2.500 2.200-2.500t2.200 2.500z" fill="#888"/></svg><i></i><span>Ruta</span></div>
        <div class="lg w7"><svg width="18" height="18"><path d="M9 13L5.500 7Q4 1.500 9 1.500T12.500 7z" fill="#666"/><circle cx="9" cy="5.500" r="1.600" fill="#ddd"/><path d="M5 12l-4 3M13 12l4 3" stroke="#666" stroke-width="1.500"/></svg><i></i><span>Zona de Despacho</span></div>
      </div>
    </div>
  </section>
</main>
</body>
</html>
```
FILE: styles.css
```css
* { box-sizing: border-box; }
html, body { margin: 0; height: 100%; overflow: hidden; }
body { display: flex; flex-direction: column; width: 1359px; height: 691px; font-family: "Noto Sans", sans-serif; font-size: 11px; color: #111; }
.defs { position: absolute; }
svg { display: block; flex: none; }

/* Browser chrome */
.browser { flex: none; height: 51px; background: #565656; }
.tabs { position: relative; height: 14px; display: flex; overflow: hidden; background: #404040; }
.tab-lines { position: absolute; left: 0; top: 0; }
.tab { display: flex; align-items: flex-start; flex: none; height: 14px; color: #ddd; font: 12.200px/16px "Open Sans", sans-serif; }
.tab-1 { width: 198px; padding-left: 21px; }
.tab-2 { width: 193px; padding-left: 16px; }
.tab-3 { width: 194px; padding-left: 16px; }
.tab-4 { width: 196px; padding-left: 12px; background: #565656; }
.fav { margin: -6px 8px 0 0; }
.tab-4 .fav { margin: -9px 6px 0 0; }
.tab-title { width: 132px; height: 16px; margin-top: -8px; white-space: nowrap; overflow: hidden; letter-spacing: -.2px; }
.tab-4 .tab-title { width: 141px; letter-spacing: -.3px; }
.fade { -webkit-mask-image: linear-gradient(90deg, #000 85%, transparent); mask-image: linear-gradient(90deg, #000 85%, transparent); }
.tx { margin: -3px 0 0 8px; }
.tab-4 .tx { margin-left: 0; }
.toolbar { height: 37px; display: flex; align-items: center; border-bottom: 1px solid #777; }
.nav-icons { margin: 0 8px 0 0; }
.omnibox { display: flex; align-items: center; width: 1171px; height: 27px; padding-left: 6px; background: #fff; border: 1px solid #3e3e3e; border-radius: 3px; }
.omnibox svg:last-child { overflow: visible; }
.url { margin-left: 6px; margin-right: 4px; width: 1092px; overflow: hidden; font: 14px "Open Sans", sans-serif; fill: #777; }
.ext { margin-left: 8px; }

/* Page */
.stage { position: relative; flex: 1; overflow: hidden; }
.map, .banner { position: absolute; left: 0; top: 0; }
.map text { font-family: Roboto, sans-serif; paint-order: stroke; stroke: #fff; stroke-width: 2.500px; stroke-linejoin: round; }
.city text { fill: #333; }
.city .big { fill: #222; font-weight: 500; }
.state text { font-size: 18px; fill: #9c8f78; letter-spacing: 4px; font-weight: 500; }
.park text { font-size: 12.500px; fill: #3c8a1e; font-style: italic; }
.map .route text { font-size: 10px; fill: #333; stroke: none; }
.stone { mix-blend-mode: soft-light; opacity: .5; }
.logo { font-family: "Liberation Sans", sans-serif; }
.l1 { font-size: 39px; fill: #808689; }
.l2 { font-size: 39px; font-weight: 700; fill: #0453a3; }
.l3 { font-size: 25px; font-weight: 700; fill: #84888b; }
.l4 { font-size: 13px; fill: #75787b; }

.rounds { position: absolute; left: 527px; top: 6px; display: flex; gap: 6px; }
.round { width: 38px; height: 38px; border: 1px solid #1b65b0; border-radius: 50%; background: linear-gradient(#eee, #dcdcdc); box-shadow: 1px 2px 3px rgba(0,0,0,.4); }
.round svg { margin: -1px; }
.round.on { background: #f5f5f5; box-shadow: 2px 3px 4px rgba(0,0,0,.7); }
.round.empty { border-color: transparent; background: rgba(225,225,225,.35); box-shadow: 2px 1px 2px rgba(0,0,0,.35); }

.account { position: absolute; left: 1065px; top: 6px; width: 291px; display: flex; justify-content: space-between; color: #3f5f96; }
.who strong { display: block; margin: 4px 0 0 25px; font: bold 14px/16px "Liberation Serif", serif; }
.mail { display: flex; align-items: center; height: 20px; gap: 7px; font-size: 12px; letter-spacing: -.39px; }
.date { position: absolute; left: 1115px; top: 58px; color: #fff; font: 12px/18px "Liberation Serif", serif; letter-spacing: -.05px; white-space: nowrap; }

.mini { position: absolute; left: 6px; top: 93px; display: flex; flex-direction: column; gap: 4px; }
.mini svg { border: 1px solid #234; border-radius: 2px; background: #d9e8f8; }
.tiles { position: absolute; left: 32px; top: 95px; display: flex; gap: 6px; }
.tile { width: 50px; height: 49px; border: 2px solid #b9bec6; border-bottom-color: #d9dde3; border-radius: 6px; background: linear-gradient(125deg, transparent 52%, rgba(255,255,255,.25) 53%, transparent 75%), linear-gradient(#858688, #5b6779 40%, #2b5592 75%, #27508e); box-shadow: 0 2px 2px rgba(0,0,0,.55); }
.tile:nth-child(n+5) { background: linear-gradient(135deg, rgba(255,255,255,.15) 40%, rgba(255,255,255,.25) 41%, transparent 46%), linear-gradient(#858688, #5b6779 40%, #2b5592 75%, #27508e); }
.tile svg { margin: -2px; }
.side { position: absolute; left: 0; top: 325px; }
.pulse { position: absolute; left: 1250px; top: 155px; }
.zoomer, .man, .maptype { position: absolute; background: #fff; border-radius: 2px; box-shadow: 0 1px 3px rgba(0,0,0,.3); }
.zoomer { left: 1322px; top: 293px; width: 28px; height: 55px; }
.man { left: 1322px; top: 358px; width: 28px; height: 28px; }
.maptype { left: 1254px; top: 406px; width: 96px; height: 29px; display: flex; font: 11px/29px Roboto, sans-serif; color: #565656; }
.maptype b { width: 43px; padding-left: 8px; font-weight: 500; color: #000; border-right: 1px solid #e6e6e6; }
.maptype span { padding-left: 8px; letter-spacing: .1px; }
.edit { position: absolute; left: 1055px; top: 618px; display: flex; gap: 12px; }
.edit span { width: 44px; height: 40px; border: 1px solid #777; border-radius: 5px; background: linear-gradient(110deg, #bdbdbd, #e9e9e9 45%, #a9a9a9 55%, #c4c4c4); }
.edit svg { margin: -1px; }

/* Window */
.win { position: absolute; left: 11px; top: 149px; width: 900px; height: 520px; padding: 0 5px; background: #e8e8e8; border: 1px solid #a0a0a0; border-radius: 6px 6px 0 0; box-shadow: 1px 2px 4px rgba(0,0,0,.5); }
.win-head { display: flex; justify-content: space-between; height: 24px; padding: 0 0 0 2px; color: #333; font-size: 11px; line-height: 23px; letter-spacing: .22px; }
.tools { display: flex; gap: 2px; padding: 4px 0; }
.tools span { width: 15px; height: 15px; border: 1px solid #999; border-radius: 3px; background: #f6f6f6; }
.frame { border: 1px solid #bcb1b0; border-bottom: 0; height: 500px; padding: 0 1px; background: #d0d0d0; margin: 0 -1px; }
.tabstrip { display: flex; gap: 2px; height: 24px; padding: 2px 1px 0 2px; background: linear-gradient(#e0e0e0, #cfcfcf); border-bottom: 1px solid #d5d0d0; }
.wt { height: 21px; border: 1px solid #a9a9a9; border-bottom: 0; border-radius: 3px 3px 0 0; background: linear-gradient(#dcdcdc, #ededed); color: #707070; font-weight: 700; line-height: 20px; letter-spacing: .16px; text-align: center; width: 152px; white-space: nowrap; }
.wt.active { width: 127px; background: linear-gradient(#fff, #eee); color: #333; }
.panel { margin-top: 2px; border: 1px solid #bcb1b0; background: #fff; width: 886px; height: 420px; display: flex; flex-direction: column; }
.search { display: flex; align-items: center; justify-content: flex-end; height: 25px; padding-right: 4px; background: linear-gradient(#e4e4e4, #efefef); }
.field { height: 19px; border: 1px solid #b5b8c8; background: #fff; font-size: 12px; line-height: 17px; padding-left: 3px; color: #222; }
.date-f { width: 113px; letter-spacing: .1px; }
.find-f { width: 236px; margin-left: 1px; color: #777; letter-spacing: -.35px; }
.trig { width: 17px; height: 19px; border: 1px solid #b5b8c8; border-left-color: #ddd; background: linear-gradient(#f2f2f2, #ccc); overflow: hidden; }
.trig svg { margin: -1px 0 0 -1px; }
.date-f + .trig + .trig { width: 18px; }
.grid { display: grid; grid-template-columns: 24px 18px 35px 88px 88px 87px 87px 87px 104px 61px 87px 57px 61px; width: 884px; }
.grid > span { overflow: hidden; white-space: nowrap; padding-left: 6px; font-size: 10.600px; }
.ghead { height: 24px; border: solid #c5c5c5; border-width: 1px 0; background: linear-gradient(#fafafa, #e6e7e9); }
.ghead > span { border-right: 1px solid #c5c5c5; line-height: 20px; letter-spacing: -.03px; }
.rows { flex: 1; }
.row { height: 25px; border-bottom: 1px solid #ededed; }
.row > span { line-height: 26px; color: #000; letter-spacing: -.05px; }
.row > .exp { background: linear-gradient(90deg, #f5f5f5, #e9e9e9); border-right: 1px solid #d0d0d0; padding: 9px 0 0 7px; }
.row > .rad { padding: 8px 0 0 3px; }
.rad i { display: block; width: 12px; height: 12px; border: 1px solid #888; border-radius: 50%; background: radial-gradient(circle at 40% 40%, #e8e8e8 20%, #bbb); box-shadow: inset 0 0 0 1px #eee; }
.row > .ico { display: flex; gap: 2px; padding: 4px 0 0 0; }
.row > .late { color: #f00; letter-spacing: .15px; }
.row > .ok { color: #008000; letter-spacing: .18px; }
.pager { display: flex; align-items: center; height: 29px; padding: 0 6px 0 2px; border-top: 1px solid #c9c9c9; background: linear-gradient(#e4e4e4, #efefef); font-size: 10.600px; letter-spacing: -.1px; }
.pb { width: 22px; height: 22px; border: 1px solid #ddd; border-radius: 3px; margin-right: 2px; }
.bar { width: 2px; height: 14px; border-left: 1px solid #a0a0a0; background: #fff; }
.pl { margin-left: 6px; width: 41px; }
.pnum { width: 30px; height: 22px; border: 1px solid #b5b8c8; background: #fff; padding-left: 4px; line-height: 21px; }
.of { margin-left: 8px; width: 27px; white-space: nowrap; }
.bar + .pb { margin-left: 2px; }
.count { margin-left: auto; white-space: nowrap; }
.legend { display: flex; height: 40px; margin-top: 1px; padding: 3px 0 0 3px; border: 1px solid #bcb1b0; background: linear-gradient(#d8d8d8, #e2e2e2); color: #b0b0b0; width: 886px; }
.lg { display: flex; flex: none; white-space: nowrap; font-size: 10.600px; line-height: 20px; }
.lg i { flex: none; width: 13px; height: 13px; margin: 4px 3px 0 9px; border: 2px solid #ccc; background: #ddd; }
.w1 { width: 100px; } .w2 { width: 103px; } .w3 { width: 127px; } .w4 { width: 122px; } .w5 { width: 88px; } .w6 { width: 76px; } .w7 { width: 140px; }
.w2 i { margin-left: 12px; }
```
